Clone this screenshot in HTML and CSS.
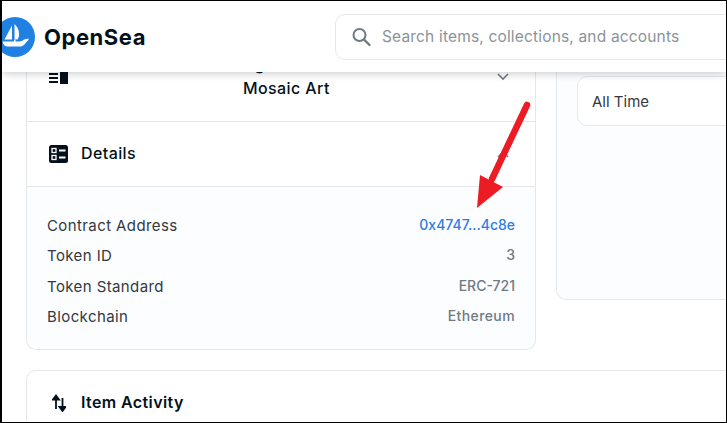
FILE: index.html
```html
<!DOCTYPE html>
<html lang="en">

<head>
    <meta charset="UTF-8">
    <meta name="viewport" content="width=device-width, initial-scale=1.0">
    <title>OpenSea</title>
    <link rel="stylesheet" href="styles.css">
</head>

<body>
    <div class="page">
        <header class="topbar">
            <a class="brand" href="#">
                <svg class="brand-logo" viewBox="0 0 40 40" width="40" height="40">
                    <circle cx="20" cy="20" r="20" fill="#2081e2" />
                    <path d="M17 8.500 L17 22.500 L9.500 22.500 Z" fill="#fff" />
                    <path d="M19.500 7 C24 11 25.500 18 22.500 22.500 L19.500 22.500 Z" fill="#fff" />
                    <path d="M7.500 24.500 H19 V22.800 H20.500 V24.500 H24 C26 24.500 28 23.500 29 22.500 L33.500 21.500 V23 C31 24.500 30 28.500 26 29.500 H13 C10 29.500 8 27.500 7.500 24.500 Z" fill="#fff" />
                </svg>
                <span class="brand-name">OpenSea</span>
            </a>
            <div class="search">
                <svg class="search-icon" viewBox="0 0 20 20" width="20" height="20">
                    <circle cx="8.500" cy="8" r="6" fill="none" stroke="#707a83" stroke-width="2" />
                    <path d="M13 12.500 L18.500 18" stroke="#707a83" stroke-width="2.400" stroke-linecap="round" />
                </svg>
                <span class="search-text">Search items, collections, and accounts</span>
            </div>
        </header>

        <main class="content">
            <div class="columns">
                <section class="card card-left">
                    <div class="row row-about">
                        <svg class="row-icon" viewBox="0 0 20 12" width="20" height="12">
                            <path d="M0 1h9v2H0zM0 5h9v2H0zM0 9h9v2H0z" fill="#04111d" />
                            <rect x="11" y="0" width="8" height="12" fill="#04111d" />
                        </svg>
                        <div class="row-title row-title-about">
                            <span>Ag</span>
                            <span>Mosaic Art</span>
                        </div>
                        <svg class="chevron" viewBox="0 0 12 8" width="12" height="8">
                            <path d="M1 1 L6 6 L11 1" fill="none" stroke="#707a83" stroke-width="1.600" />
                        </svg>
                    </div>
                    <div class="row row-details">
                        <svg class="row-icon" viewBox="0 0 19 18" width="19" height="18">
                            <rect width="19" height="18" rx="2.500" fill="#04111d" />
                            <rect x="3" y="3.500" width="4" height="4" fill="none" stroke="#fff" stroke-width="1.300" />
                            <rect x="3" y="10.500" width="4" height="4" fill="none" stroke="#fff" stroke-width="1.300" />
                            <path d="M10 4.500h6.500v2H10zM10 11.500h6.500v2H10z" fill="#fff" />
                        </svg>
                        <span class="row-title row-title-details">Details</span>
                        <svg class="chevron" viewBox="0 0 12 8" width="12" height="8">
                            <path d="M1 7 L6 2 L11 7" fill="none" stroke="#707a83" stroke-width="1.600" />
                        </svg>
                    </div>
                    <dl class="details">
                        <div class="detail">
                            <dt>Contract Address</dt>
                            <dd><a href="#">0x4747...4c8e</a></dd>
                        </div>
                        <div class="detail">
                            <dt>Token ID</dt>
                            <dd>3</dd>
                        </div>
                        <div class="detail">
                            <dt>Token Standard</dt>
                            <dd>ERC-721</dd>
                        </div>
                        <div class="detail">
                            <dt>Blockchain</dt>
                            <dd class="detail-word">Ethereum</dd>
                        </div>
                    </dl>
                </section>

                <aside class="card card-right">
                    <div class="select">All Time</div>
                </aside>
            </div>

            <section class="card card-activity">
                <svg class="row-icon" viewBox="0 0 14 18" width="14" height="18">
                    <path d="M4 15 V3 M1 5.500 L4 1.500 L7 5.500 Z" fill="#04111d" stroke="#04111d" stroke-width="1.800" />
                    <path d="M10.500 4 V16 M7.500 13 L10.500 17 L13.500 13 Z" fill="#04111d" stroke="#04111d" stroke-width="1.800" />
                </svg>
                <span class="row-title row-title-activity">Item Activity</span>
            </section>
        </main>

        <svg class="arrow" viewBox="0 0 60 110" width="60" height="110">
            <path d="M53 4 L18 78" stroke="#ed1c24" stroke-width="6.500" stroke-linecap="round" fill="none" />
            <path d="M6 74 L29 86 L3 107 Z" fill="#ed1c24" />
        </svg>
    </div>
</body>

</html>
```

FILE: styles.css
```css
* {
    box-sizing: border-box;
}

html,
body {
    margin: 0;
    padding: 0;
}

.page {
    position: relative;
    display: flex;
    flex-direction: column;
    width: 727px;
    height: 423px;
    overflow: hidden;
    border: 1px solid #000;
    border-left-width: 2px;
    background: #fff;
    font-family: Inter, "Open Sans", sans-serif;
    color: #353840;
}

.topbar {
    position: relative;
    z-index: 2;
    flex: none;
    display: flex;
    align-items: center;
    height: 71px;
    background: #fff;
    box-shadow: 0 2px 8px rgba(4, 17, 29, 0.2);
}

.brand {
    display: flex;
    align-items: center;
    gap: 9px;
    margin-left: -7px;
    color: #04111d;
    text-decoration: none;
}

.brand-logo {
    flex: none;
}

.brand-name {
    font-size: 22px;
    font-weight: 700;
    letter-spacing: 0.550px;
}

.search {
    display: flex;
    align-items: center;
    flex: none;
    width: 500px;
    height: 46px;
    margin-left: 189px;
    padding-left: 15px;
    border: 1px solid #e5e8eb;
    border-radius: 10px;
}

.search-icon {
    flex: none;
}

.search-text {
    margin-left: 11px;
    font-size: 15.500px;
    letter-spacing: 0.170px;
    color: #8a939b;
    white-space: nowrap;
}

.content {
    flex: 1;
    min-height: 0;
    padding-left: 24px;
}

.columns {
    display: grid;
    grid-template-columns: 510px 300px;
    column-gap: 20px;
    align-items: start;
}

.card {
    border: 1px solid #e5e8eb;
    border-radius: 10px;
}

.card-left {
    border-top: 0;
    border-top-left-radius: 0;
    border-top-right-radius: 0;
}

.row {
    display: flex;
    align-items: center;
    padding: 0 26px 0 22px;
    border-bottom: 1px solid #e5e8eb;
}

.row-about {
    align-items: flex-start;
    height: 50px;
    overflow: hidden;
}

.row-details {
    height: 65px;
}

.row-icon {
    flex: none;
}

.row-title {
    margin-left: 13px;
    font-size: 16px;
    font-weight: 500;
    letter-spacing: 0.400px;
    color: #04111d;
}

.row-title-about {
    display: flex;
    flex-direction: column;
    margin-top: -20px;
    margin-left: 174px;
    line-height: 24px;
}

.row-title-details {
    margin-bottom: 2px;
}

.row-title-activity {
    margin-left: 15px;
    font-weight: 600;
    letter-spacing: 0.400px;
}

.chevron {
    flex: none;
    margin-left: auto;
}

.row-about .chevron {
    margin-top: 1px;
}

.details {
    margin: 0;
    height: 162px;
    padding: 29px 20px 0;
    border-radius: 0 0 10px 10px;
    background: #fbfdff;
    font-size: 15px;
    letter-spacing: 0.400px;
}

.detail {
    display: flex;
    justify-content: space-between;
    height: 30.300px;
}

.detail dd {
    margin: 0;
    font-size: 14px;
    font-weight: 500;
    letter-spacing: 0;
    color: #707a83;
}

.detail dd.detail-word {
    letter-spacing: 0.400px;
}

.detail a {
    color: #2f7ce0;
    text-decoration: none;
}

.card-right {
    height: 228px;
    padding: 4px 20px 0;
    border-top: 0;
    border-top-left-radius: 0;
    border-top-right-radius: 0;
    background: #fbfdff;
}

.select {
    display: flex;
    align-items: center;
    height: 50px;
    padding-left: 14px;
    border: 1px solid #e5e8eb;
    border-radius: 10px;
    background: #fff;
    font-size: 15px;
}

.card-activity {
    display: flex;
    align-items: flex-start;
    width: 800px;
    height: 80px;
    margin-top: 20px;
    padding: 23px 0 0 25px;
}

.row-title-activity {
    margin-top: -2px;
}

.arrow {
    position: absolute;
    left: 472px;
    top: 100px;
    z-index: 3;
}
```
